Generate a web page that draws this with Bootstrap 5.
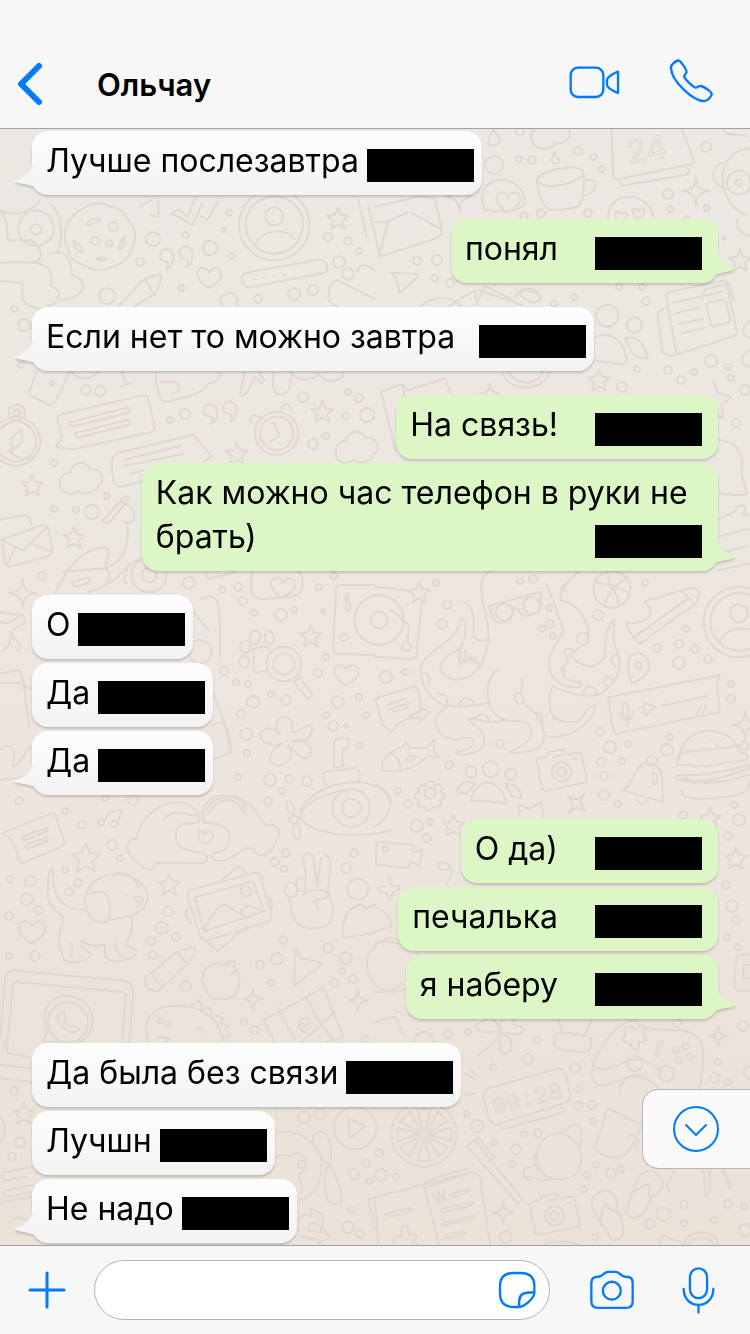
<!DOCTYPE html>
<html lang="ru">
<head>
<meta charset="utf-8">
<meta name="viewport" content="width=device-width, initial-scale=1">
<title>Ольчау</title>
<link href="https://cdn.jsdelivr.net/npm/bootstrap@5.3.0/dist/css/bootstrap.min.css" rel="stylesheet">
<style>
  :root { --ios-blue: #007aff; --bar: #f7f7f7; --line: #a2a2a4; }
  body { font-family: Inter, "Liberation Sans", sans-serif; color: #000; background: var(--bar); }
  .tool { border: 0; background: none; padding: 0; color: var(--ios-blue); line-height: 0; flex: none; }
  .tool svg, .jump svg { fill: none; stroke: currentColor; stroke-linecap: round; stroke-linejoin: round; display: block; }
  .topbar { background: var(--bar); border-bottom: 1px solid var(--line); padding: 40px 36px 0 17px; height: 129px; }
  .topbar h1 { font-size: 31px; font-weight: 600; line-height: 40px; margin: 0 0 0 54px; padding-top: 2px; }
  .calls { gap: 49px; }
  .chat { background: linear-gradient(#ebe8e3, #ede6e0 50%, #ebe2d8); padding: 2px 32px; overflow: hidden; }
  .doodles { position: absolute; inset: 0; width: 100%; height: 100%; fill: none; stroke: #dfd9d1; stroke-width: 2px; stroke-linecap: round; stroke-linejoin: round; }
  .doodles * { vector-effect: non-scaling-stroke; }
  .doodles text { stroke-width: 1px; }
  .thread { gap: 24px; }
  .burst { gap: 4px; }
  .bubble { font-size: 32px; line-height: 44px; padding: 8px 8px 12px 14px; border-radius: 16px; max-width: 84%; position: relative;
    background: linear-gradient(#fdfdfd, #f3f3f4); filter: drop-shadow(0 2px 1px rgba(0,0,0,.17)); }
  .sent .bubble { background: #dcf7c5; padding-right: 16px; }
  .bubble p { margin: 0; }
  .stamp { float: right; width: 107px; height: 33px; margin: 10px 0 0 8px; background: #000; }
  .sent .stamp { margin-left: 37px; }
  .burst .bubble:last-child::after { content: ""; position: absolute; left: -18px; bottom: 8px; width: 22px; height: 24px; background: #f5f5f6;
    clip-path: path("M18 0 C18 9 10 15 0 18 C5 21 13 21 22 24 L22 0 Z"); }
  .sent .bubble:last-child::after { left: auto; right: -18px; background: #dcf7c5;
    clip-path: path("M4 0 C4 9 12 15 22 18 C17 21 9 21 0 24 L0 0 Z"); }
  .jump { position: absolute; right: 0; bottom: 76px; width: 108px; height: 80px; padding: 0 0 0 29px; color: var(--ios-blue);
    background: #fafafa; border: 1px solid #b5b5b7; border-right: 0; border-radius: 16px 0 0 16px; }
  .composer { background: var(--bar); border-top: 1px solid var(--line); height: 89px; padding: 0 35px 0 28px; }
  .field { height: 60px; min-width: 0; border: 1px solid #b4b4b6; border-radius: 30px; background: #fff; margin: 0 40px 0 28px; padding: 0 13px 0 28px; }
  .field input { border: 0; outline: 0; background: none; font-size: 32px; min-width: 0; width: 0; }
  .snap { margin-right: 48px; }
</style>
</head>
<body class="d-flex flex-column min-vh-100">
<header class="topbar d-flex align-items-center">
  <button class="tool" type="button" aria-label="Назад"><svg width="26" height="44" viewBox="0 0 26 44" stroke-width="6"><path d="M22 4 4 22l18 18"/></svg></button>
  <h1 class="flex-grow-1">Ольчау</h1>
  <div class="calls d-flex align-items-center">
    <button class="tool" type="button" aria-label="Видеозвонок"><svg width="51" height="36" viewBox="582 78 153 108" stroke-width="7"><rect x="587" y="83" width="98" height="88" rx="22"/><path d="M729 95V159C715 153 696 142 696 134V120C696 112 715 100 729 95Z"/></svg></button>
    <button class="tool" type="button" aria-label="Звонок"><svg width="45" height="52" viewBox="880 50 136 156" stroke-width="7"><path d="M886 78C886 68 902 57 909 57C914 57 934 84 933 92C932 98 924 101 926 107C930 116 955 138 960 139C966 139 970 133 976 134C984 135 1009 151 1009 158C1009 164 998 180 987 180C955 180 886 120 886 78Z"/></svg></button>
  </div>
</header>

<main class="chat flex-grow-1 position-relative">
  <svg class="doodles" viewBox="0 129 750 1116" preserveAspectRatio="xMidYMin slice" aria-hidden="true">
    <defs>
      <path id="star" d="M0-32 9-10 32-8 15 8 20 31 0 19-20 31-15 8-32-8-9-10Z"/>
      <path id="spark" d="M0-44C3-12 10-5 40 0C10 5 3 12 0 44C-3 12-10 5-40 0C-10-5-3-12 0-44Z"/>
      <path id="heart" d="M-4 32C-45 5-42-28-20-28C-8-28-3-20-1-13C8-34 36-30 36-8C36 8 15 24-4 32Z"/>
      <path id="cloud" d="M-55 38C-75 10-55-20-32-18C-28-52 18-56 24-28C62-34 75 4 52 20C50 44 5 50-8 38C-20 50-45 48-55 38Z"/>
      <g id="photo"><path d="M-75-30C-76-38-70-42-62-42L-45-44-38-60 5-66 18-52 58-58 75 22C76 30 72 34 66 34L-50 58-58 52Z"/><circle r="29"/><circle r="13"/><path d="M-26-44 8-51M35-38h8"/></g>
      <g id="avatar"><circle r="106"/><circle r="86"/><circle cy="-26" r="27"/><path d="M-58 62C-45 10 45 8 60 42"/></g>
      <g id="quotes"><path d="M-40-10c-2-30 40-30 40 2c0 18-8 32-20 36c8-15 5-22-2-24c-12 0-18-6-18-14ZM18-18c-2-30 40-30 40 2c0 18-8 32-20 36c8-15 5-22-2-24c-12 0-18-6-18-14Z"/></g>
      <g id="flop"><path d="M-10-75C20-80 34-50 28-20C40 10 55 30 48 55C40 80 8 76 4 55C-8 30-45-10-46-35C-46-55-30-72-10-75ZM-20 30C-20 5-14-20-8-40C5-15 30-10 48-5"/></g>
    </defs>
    <g transform="translate(375 40) scale(.3333)">
      <path d="M340 308c2-18 8-28 14-40c12 14 20 24 20 34c-2 16-30 20-34 6ZM528 360l10-22c20 25 18 32 4 32q-10 0-14-10"/>
      <circle cx="357" cy="375" r="27"/><path d="M470 300c-8-30 20-40 30-36h80c12 30-5 45-40 48c-20 22-60 20-70-12M330 510c-22-45 0-90 50-90c45 0 80 45 65 75c-20 20-70 24-115 15"/><use href="#heart" x="400" y="485"/>
      <path d="M485 420c10-30 120-50 140-28c14 30-120 70-140 28c2 40 20 75 35 88c30 4 70 0 92-12c15-20 18-70 13-104M630 422c45-15 40 40-2 45"/>
      <path d="M710 260l4 145c0 10 8 14 16 12l218-44c10-4 10-10 8-18l-42-100M732 420l8 18 195-34c10-6 10-14 2-22"/>
      <text transform="translate(762 372) rotate(-10)" font-size="96" font-family="Inter, sans-serif">24</text>
      <path d="M1125 325c-60 5-85 55-82 95c2 50 30 90 70 105M1045 368c-40 10-40 60 0 76"/><circle cx="1092" cy="428" r="36"/><circle cx="1092" cy="428" r="10"/>
      <path d="M1090 535c-15 20 10 55 40 50M700 540c-10-90 130-95 136 0M1045 270c15 25 40 5 70 20"/><use href="#heart" transform="translate(790 520) scale(.5)"/><use href="#heart" transform="translate(738 530) scale(.5)"/>
      <use href="#spark" x="963" y="453"/><use href="#spark" x="253" y="470"/><use href="#star" x="1095" y="660"/>
      <path d="M0 500 130 470 180 475 200 565c5 15-5 25-15 29L15 650-20 500M0 545h40L10 650M38 545l60-28M200 570 110 518M50 698l75 3c10 8 0 12-8 20l-42 38c-10-20 0-30-25-61M310 780l20-42 80 40M420 770c20-25 80-20 75 10M980 780l10-32 72-18 14 50"/>
    </g>
    <g transform="translate(0 200) scale(.3333)">
      <circle cx="108" cy="85" r="53"/><circle cx="108" cy="88" r="16"/><path d="M0 30c50 20 90 10 120-30M25 120c-5-30 0-60-25-90M0 188c90-5 120 10 122-20c2-25-15-35-28-48H30M0 245c30-5 70 10 67 0v50c10 20 40 35 60 30c50-10 70-50 25-68c5-40 0-70-70-70M150 160c60-20 65 40 66 65c50 10 45 70-35 75M150 10c40 30 40 110 20 150"/>
      <path d="M260 20c20-15 60-10 70 0c20 0 40 10 55 40c15 15 20 30 20 50c0 20-15 50-20 60c-20 20-40 30-60 35c-30 10-60 0-70-8c-25-10-45-20-50-45c-10-20-15-50-5-80c15-25 40-45 60-52ZM262 75c0-15 15-20 40-20q-20 22-40 20M220 122q20 10 30 35q-30-5-30-35M290 176q15-6 30 2q-15 8-30-2M358 150q0-25 15-40q5 30-15 40"/><circle cx="285" cy="122" r="12"/><circle cx="328" cy="130" r="10"/><circle cx="340" cy="80" r="13"/>
      <path d="M515 40l20-12 28 22 25-60M515 40l62 35 30-65M602 48l20 12 35-60M420 20l35-20M450 45l25 5 0-50"/><use href="#avatar" x="823" y="75"/>
      <use href="#star" x="1014" y="55"/><use href="#quotes" x="520" y="180"/><use href="#heart" x="628" y="232"/>
      <path d="M355 320 430 238 480 222c5 18-2 40-18 62l-60 36M430 238c10 0 14 20 32 46M740 218 950 180c30-5 45 30 18 40L750 262c-30 0-30-40-10-44M1075 0l25 110M1072 215c5-30 40-20 53 0M985 300c0-35 10-60 30-58l110 55M985 300c10 15 20 15 30 20"/><circle cx="688" cy="305" r="26"/><path d="M762 238h2M790 234h2M822 229h2M854 224h2"/>
      <path d="M110 515 88 575c0 10 5 14 12 16l50 24c10 2 12-4 16-10l44-90M215 515c20 30 60 25 80 0M365 515l15 40M362 560l35-10M470 515c-10 40 10 60 10 80c10 15 30 10 60 0c40-5 80-30 85-45c30 0 40-25 30-35M480 545h40c20 0 25 35-5 35M735 515l-15 70c15 8 20 0 45-55l20 20c15-10 0-20-10-35M820 515c-5 45 0 65 20 68c30 0 30-20 35-68c5 30 70 30 80 5c30 40 80 20 75-5"/>
      <path d="M172 660c0-10 4-14 12-17l240-56c10-3 18 0 20 8l20 85c0 12-4 15-12 17L220 748l-52-6 18-30ZM215 665l165-42c15 0 12 12 4 16l-160 40c-18 0-20-12-9-14M230 698l150-38c15 0 12 12 4 16l-145 36c-18 0-20-12-9-14"/><circle cx="50" cy="638" r="25"/><circle cx="50" cy="638" r="10"/><circle cx="48" cy="724" r="73"/><circle cx="48" cy="724" r="60"/><path d="M35 755v-40l30-28v40Z"/>
      <use href="#quotes" x="652" y="645"/><circle cx="830" cy="700" r="65"/><circle cx="830" cy="700" r="50"/><path d="M820 668c20 30 25 45-10 55M845 630c0-25 30-20 28 0M750 668c0-25 10-25 28-18"/><use href="#star" x="967" y="635"/><use href="#cloud" x="1070" y="742"/>
    </g>
    <g transform="translate(375 290) scale(.3333)">
      <path d="M130 60c25-40 100-50 130-10M220 50l80-50 8 50M310 0l130 45M425 20c5-30 60-35 70 0c-5 30-40 20-70-20"/><circle cx="697" cy="77" r="33"/><circle cx="778" cy="105" r="23"/><path d="M660 140c60-20 90 20 96 72c0 10-10 12-20 10l-75-10M750 145c40-10 60 20 68 60q-40 0-48-20q-12-20-20-40"/>
      <path d="M873 20c0-10 4-12 10-14l170-36 32 150c0 12-5 18-12 20L890 198c-18 0-25-5-28-18L848 80c0-12 5-18 20-24M873 20l32 172M895 38l150-34M905 70l70-18M912 102l72-16M920 130l68-16"/><rect x="1000" y="32" width="60" height="72" rx="8" transform="rotate(-12 1030 68)"/>
      <path d="M380 242c20 70 130 65 145 0M400 242c20 50 90 45 105 0M18 305l62-22 20 18 110-36 20 50M18 305l45 180M80 283l10 40M1125 90c-30 30-25 45 0 55M1125 180c-30 10-35 45 0 50"/><use href="#star" x="672" y="270"/><use href="#spark" transform="translate(345 310) scale(.7)"/>
      <path d="M1015 275l15 35 38 10-28 25 5 40-20-12M1030 450c60 0 80 50 70 100l15 60c-10 10-40 5-80 0M1028 690c30-20 60-20 60-40c20-10 30 10 14 24h20M1030 740l100-25M1030 790l80-20M1030 840l100-20"/>
    </g>
    <g transform="translate(0 450) scale(.3333)">
      <path d="M340 90c-12-60 0-70 10-80l230-56 55 65-30 22M340 90c5 20 20 20 30 18l60-15M370 30l170-42M372 48l178-36M390 72l60-15M25 0c50 50 90 20 92-5"/><use href="#star" x="97" y="105"/><use href="#cloud" x="243" y="85"/><use href="#star" x="710" y="10"/><use href="#star" x="222" y="262"/>
      <path d="M5 268l120-42c12-4 18 0 20 10l12 62c0 12-4 16-12 20L35 350c-12 0-18-4-20-12ZM5 268l55 30c10 5 18 0 22-8l58-58M20 345l25-50M155 305l-50-20M0 210l70-15c15 0 20 10 25 30"/>
      <path d="M305 215l60-65c10-15 20-15 22-5l-60 75ZM365 155c60 20 40 80 5 60M380 220c10 60-5 110-60 135l-130 10M165 430c40-80 70-120 130-135c30-8 40 0 20 60c30 25 10 60-50 70M220 395l45-12c15 5 10 15-30 26c-20 0-20-10-15-14M325 402c40-20 55-70 105-75M380 400c-15-5 0-40 10-60"/><circle cx="447" cy="375" r="52"/><circle cx="447" cy="375" r="22"/><use href="#spark" x="68" y="430"/>
      <path d="M615 365l10 22 80-20M757 365c-10 70 0 80 30 82l95-8c35-10 30-50 15-75"/><use href="#heart" x="850" y="412"/><path d="M600 450c70-40 60 40 60 170M575 480l50 60M1125 405l-105 0c-10 0-12 5-12 15l-8 175c0 10 5 15 12 16l113 5"/><path d="M1042 430c12 10-5 20 5 30s5 15-5 25c-10-15 0-20-5-30s0-20 5-25"/><circle cx="600" cy="605" r="35"/><circle cx="1032" cy="562" r="11"/>
      <path d="M0 485l60 10M10 600c40-20 0-60 65-80c-10-60-20 0-60 0c-25 0-30-30-15-30M40 560c20 20 30 40 10 40M0 670l60-10 15 50 25 10M0 700h70l18 130M630 710c30 60 60 150 60 200l-60 20M640 825c50-30 50 60 55 80M0 900c20-20 50-20 40 40c-5 20 10 10 50-50M0 990l80-10"/>
      <use href="#star" x="932" y="557"/><use href="#heart" x="1040" y="674"/><circle cx="852" cy="642" r="52"/><circle cx="852" cy="642" r="32"/><path d="M882 695l18-12 34 46c8 10-8 22-16 12ZM760 598c20-10 40-10 50 0M758 598c8 40-5 60 10 70l30-6"/><ellipse cx="765" cy="562" rx="16" ry="20"/><ellipse cx="808" cy="563" rx="14" ry="20"/><ellipse cx="735" cy="590" rx="15" ry="18"/><ellipse cx="733" cy="635" rx="15" ry="18"/>
      <path d="M840 855c-40-60 50-80 35-10c10 15 70-50 60 0c-5 30-35 25-60 30c60-15 75 45 40 50c-30-5-30-30-50-40c40 60-60 80-55 40c2-25 15-30 40-45c-60 15-85-20-60-40c20-15 35 0 50 15M862 870v2M1002 875c10-15 20-10 45-8l-5 30-14-2v55l-26 4ZM980 1005c-10-20-15-35-5-40l92-12c15 0 15 30 8 45M900 1080c40-60 100-85 180-84c40 5 80 20 96 60"/><path d="M620 1080c20-45 90-60 120-5"/>
    </g>
    <g transform="translate(375 560) scale(.3333)">
      <path d="M0 80l105 12M140 125l-15 160c0 8-4 12-12 12L0 290M50 150l40 35c15 10 10 10 8 62"/><circle cx="12" cy="180" r="74"/><circle cx="12" cy="180" r="25"/><circle cx="95" cy="260" r="13"/><use href="#star" x="132" y="97"/>
      <path d="M348 30c-40 20-30 60-25 100c20 60 30 130-10 190c-10-20-40-30-60-5c-5-60 20-60 18-105c-5-50-15-40-18-15c-20 60-110 80-115 130c-5 60 40 105 80 112c30 5 80 0 122-8M265 125c40 20 30 70 30 90c5 30 20 30 48 22M255 265c-60 30-75 60-40 85c40 25 80-5 100-30M375 325c-50 20-50 120 0 148c30 20 90-5 95 40c-5 50-60 50-65 65c40 0 110 0 102-60c-5-40-25-55-60-90c-15-30-5-50-5-72M515 70c10 30 30 80 50 140c-5 30-40 50-43 100c0 60 60 80 95 70c10-20-30-10-50-30c-5-30 20-80 70-100c15-60-25-120-80-130c-5-50 40-60 50-85M590 290c20 20 50 40 80 20c40-20 0-70 45-130c10 20-10 60 10 90c30 70-20 110-45 130c-30 15-90 5-145-20M530 385c-20 80 10 110 75 100c30-15 20-40 55-50c0 50-80 110-150 92M220 438c-60 30-40 90 10 100c40 5 60-20 65 10c0 20-30 20-55 32c30 10 90 0 88-40c-5-30-20-40-50-60c15-15 60 20 110 0"/>
      <path d="M342 137l156-42v35c0 20-8 30-30 36c-25 5-35-5-42-22h-10c0 20-8 35-30 42c-25 5-30-5-36-25Z"/><circle cx="388" cy="157" r="26"/><circle cx="470" cy="137" r="26"/><path d="M140 340c20 0 30 10 18 30M185 400c25 0 32 10 32 32M250 438c8-30 40-30 48-4M300 480c10-25 35-20 42 6M570 95c10-30-10-30-14 0M640 225c-30-20-40 10-28 25M575 295c-15-30 0-35 20-25M560 340c-5-15 5-25 10-15M730 285c-20-10-25 25-8 35M710 360c-20-25-40 10-10 20M625 402c5-30 35-30 40 0M440 400c-35-10-20 40 0 30M480 460c30 0 20 20 20 30M535 480c5-15 15-5 20 5M270 270c10 20 0 30-10 25M275 305c10-20 35-15 38 15"/>
      <circle cx="711" cy="88" r="55"/><path d="M665 70c40-5 80 20 100 30M690 130c20-60 50-60 70-80M700 35c-10 30 30 50 30 100"/><path d="M808 125 830 117c30-5 60-20 90-26c40-15 60-5 50 20c-5 20-30 40-60 55L795 252c-15-5-30-40-42-62c40 0 65 0 75-40ZM780 230 940 115M920 92l30 30"/><use href="#avatar" x="1092" y="186"/>
      <path d="M770 370c-40-120 50-100 53-55c0 25-20 40-53 55M700 412l334-66-8 30 8 80-312 66c-8-5-20-90-22-110M742 435c0-10 14-12 16 0l4 30c0 10-14 12-16 0ZM735 460c5 30 40 25 38-5M757 480v15M805 430l5 38 30-28ZM860 437l135-28M965 460l12-18M982 458l14-24"/><circle cx="790" cy="315" r="10"/>
      <path d="M2 415l115-35c5 0 10 5 12 10l10 50M2 415l20 80 30 20 18-25 38-18M38 435l55-20M42 448l60-18M50 455l50-12M105 465l10 10 20-4v14l30-28-30-14v14ZM20 615c10-30 40-50 65-55l8-15 10 18 50 2 25-25-2 32 18 20-40-4c-20 30-60 50-130 45ZM50 580c20 10 30 40 25 55M90 600q15-18 32-10q-10 18-32 10"/>
      <circle cx="165" cy="700" r="16"/><path d="M155 665h20l4 12 12-6 12 14-6 10 10 8v14l-12 4 4 12-14 12-10-6-8 12h-14l-4-12-12 4-10-12 6-10-12-6v-14l12-4-4-12 12-10 10 4Z"/><circle cx="347" cy="628" r="24"/><circle cx="288" cy="635" r="17"/><circle cx="407" cy="643" r="17"/><path d="M287 720c15-70 90-70 108 10ZM247 695c5-30 25-35 54-25l-25 32ZM392 672c30 0 45 15 47 42l-30-5Z"/><use href="#photo" x="560" y="635"/>
      <path d="M743 692c40-30 30-70 65-82c40-5 50 20 54 45l2 70ZM785 715c10 25 30 20 35 4"/><circle cx="830" cy="602" r="15"/><path d="M832 640c20-10 20 35 5 35ZM915 598c0-110 160-110 178-20l20 5c10 10 0 20-20 18c-20 20-30-5-50 10l-50 8c-20-10-30 10-45-5l-38 0c-10-10 0-20 5-36l178-20M905 645c60 5 150-10 215-30l5 10c-60 20-120 50-220 34ZM915 660c20-20 40 25 60 0c20 20 40 0 70 5l80-20M920 690c0 30 60 30 110 22c80-5 100-20 90-52M955 550v2M985 562h2M1005 540v3M1025 556h2M1042 538h3"/>
      <use href="#spark" x="1110" y="495"/><use href="#spark" transform="translate(605 730) rotate(40) scale(.85)"/><use href="#star" x="235" y="795"/><use href="#star" x="1005" y="775"/><path d="M435 775l-4-42 30 15 38-22 5 48M0 675c50 10 70 80 0 125"/>
    </g>
    <g transform="translate(0 790) scale(.3333)">
      <path d="M5 130l150-60 10 2 28 85c0 10-5 12-10 14L65 220c-10-10-15-60-40-80ZM70 138l70-24c10 5 5 12-66 36c-15-2-10-10-4-12M80 162l60-18c10 5 5 12-56 32c-15-2-10-10-4-14"/><circle cx="304" cy="97" r="9"/><circle cx="343" cy="101" r="9"/><path d="M313 97l15-32 38-6-14 42"/>
      <path d="M412 145c5-50 60-110 110-106c60-10 80 40 75 55c-20 15-60-10-70 35c0 60 40 50 80 60c20 10 20 25 0 30c-50 5-90-5-140 0c-5 20-20 25-35 15c-15-15-40-25-50-60c0-20 10-25 30-29M495 85c20-30 60-15 100-5M612 98c-15-50 20-90 70-80c60-5 90 50 115 90c30-10 50 10 35 40c-10 30-30 55-60 45c-20-10-5-20-20-18c-40-5-50 50-110 35c-15-10 0-25 20-25c40-10 50-90-50-87M625 70c40-60 80-50 115 5"/><use href="#heart" transform="translate(617 142) scale(.65)"/>
      <path d="M1176 120c-60 20-220 30-275-35c0-40 60-70 130-84M885 80c-20-10-30-30-25-45c15-5 25 10 22 40c-15 0-20 20-5 25c20 5 25-15 12-20M882 100c-10 40 10 60 18 40c5-20-5-30-10-42"/><circle cx="1054" cy="54" r="56"/><circle cx="1054" cy="54" r="28"/>
      <use href="#star" transform="translate(258 203) scale(1.35)"/><use href="#star" x="508" y="283"/><path d="M255 360c-70-5-100-30-95-125c-15-10-20 60-15 90c5 40 50 40 45 75c-30 50 0 80 0 110c20 10 60 10 80-10c5-20-20-20-25-30v-18c20 20 50 15 72 12c-5 20-5 40 10 46c40 10 90-10 80-30c-5-15-35-5-32-15c15-30 25-40 22-85M265 310c40-10 60-10 65 40c5 40-10 50-30 48c-40-5-50-70-45-78c15-50 60-70 100-66c60 0 100 50 85 80c-15 50-70 45-105 55M350 250c40-5 55 20 65 40M378 315v2M405 322c10-5 18-2 24 5c0 15-24 10-24-5M410 345c10 5 15 0 15-8M215 460v40M350 455c-5 30 5 40 25 45"/>
      <path d="M570 300l190-50c15-5 20 5 22 12l32 110c0 15-5 20-12 24L620 452c-12 0-18-5-20-14L562 318c0-10 3-15 8-18ZM585 322l175-48 32 90-180 60ZM615 415c20-40 40-70 60-70l70 40M720 370c20-30 30-25 60-10M665 270l50-42 25 20M600 440c30 20 45 40 55 42l85-75M562 355c-10 20 0 35 10 45M805 320c15 15 10 25 8 40"/><circle cx="738" cy="304" r="16"/>
      <path d="M918 265l-8-60c0-20 28-20 30 0l12 85 10-80c0-20 30-15 30 5l-8 90c40 90-5 110-45 110c-50 0-65-30-72-95M858 285c-10 20 0 35 15 36c30 0 20-50-5-42M890 275c5-25 30-10 28 15c-5 20-20 15-28 5ZM910 315c15-20 70-20 75 0c-5 15-30 15-45 18c10 10 15 25 15 30"/><circle cx="1073" cy="298" r="32"/><path d="M1030 443c-5-50 5-90 55-100l12 14 28-14M1030 443l95-15"/>
      <use href="#heart" transform="translate(97 425) scale(1.1)"/><path d="M440 560 530 485l54-14c5 15-10 40-20 50l-90 82c-20 5-40-10-40-43M535 485c5 20 25 35 30 36M455 550l30 40M606 575c0-50 40-60 60-50c30-15 60 20 50 65c-5 20-20 45-50 35c-40 10-45-20-60-50M680 530c0-20 10-15 24-16q5 30-10 40M888 475l14 30 68 15-88 68Z"/><use href="#spark" transform="translate(758 628) scale(.75)"/><use href="#spark" transform="translate(1073 632) scale(.75)"/>
      <path d="M15 750l-8 40M0 750l15-180c0-20 10-30 30-28l330 30c20 5 25 15 25 35l-12 150M20 790l18-200c0-10 5-15 12-14l320 30c8 2 10 5 8 12l-12 140M20 790l70 10M0 825l100 10M0 865l100 12M130 755l10-30c-40-150 150-130 137-20c-10 50-60 70-97 50Z"/><circle cx="204" cy="697" r="60"/><path d="M180 668c15-8 20 15 12 22c0 10 15 20 25 20c10-5 20 5 18 10c-25 25-80-25-55-52"/>
      <path d="M445 755c-20-60 10-110 80-106c60-5 130 20 145 105M570 650l28-20 8 30M610 655l24 0 0 20M645 675l24 8-8 15M665 700l22 8-12 12M670 738l22-2-14 14M470 740l40 5-15 12M590 718q15-10 25 8"/><circle cx="480" cy="692" r="8"/><circle cx="506" cy="702" r="8"/><path d="M790 690 970 594l60 145M790 690l35 68M835 655l50 95M918 622l45 80M1005 665l-100 92M1030 740l-50 15M970 710l40 50M895 710c0-30 35-35 35-5l-15 25Z"/><circle cx="911" cy="704" r="6"/><circle cx="1180" cy="525" r="80"/>
    </g>
    <g transform="translate(375 840) scale(.3333)">
      <path d="M5 5l110 10v22l28-8-10 50-25-15-10 20-95-10Z"/><circle cx="31" cy="27" r="8"/><path d="M40 110c5 30 10 30 32 25c10 20-20 15-22 28c5 20-10 30-15-5c-30 0-40-15-5-20M0 200c30 10 50 40 50 60l-50 15M0 310c30-15 70 0 75 5M0 455c30 5 70 0 80-30"/><path d="M185 70c40-10 60 20 30 60M190 75c0 20 20 15 40 10"/>
      <use href="#star" x="1083" y="55"/><path d="M1125 340l-40 8c-10 100-10 100 10 105h30M1125 375h-20v40h20"/>
      <path d="M378 575c-80 10-90-20-55-30c20-20 40-10 55 30c-20-50 50-50 40-20c50 5 30 45-40 20c50 30 30 70 15 65c-15 10-25-20-15-65c-10 30-40 50-70 72M550 540l15 40M650 540l-25 50M540 590c0-15 20-12 40-10c40 5 75 10 70 20c0 40-20 40-40 35c-70-5-80-10-70-45M650 700c10-60 60-150 130-160c20 50 150 10 185 50c30 20 20 90 10 160M650 700c10 70 80 20 110 10c40-5 70 10 95 40M750 575c0-20 20-20 30-5c20-20 40-5 25 15c20 10 0 25-15 20c10 30-20 30-25 5c-20 0-25-15-15-20ZM838 645l16-40c10-5 12 0 8 8l-16 36ZM1125 680c-20 0-30 20 0 40"/><circle cx="780" cy="670" r="23"/><circle cx="875" cy="700" r="23"/><circle cx="902" cy="630" r="9"/><circle cx="932" cy="618" r="9"/><circle cx="914" cy="662" r="9"/><circle cx="944" cy="650" r="9"/><use href="#spark" transform="translate(1030 588) scale(.7)"/><path d="M0 545l60-15 30 60M60 510l20 10M120 605c0-40 50-40 55 0"/>
    </g>
    <g transform="translate(0 1030) scale(.3333)">
      <use href="#star" x="72" y="250"/><path d="M0 260c20 20 20 60 0 80M100 410 20 425c-20 5-20 25 0 25l60-10M100 465l-75 15c-20 0-20 20 0 20l75-15M10 515l90-15M30 580c10-25 50-20 60 5M830 310c60-20 130 30 135 80c5 60-20 110-65 120M820 390c20-30 60 0 65-20c40-10 40 60 15 60c-10 20 20 40 0 60M960 305c25-5 40 50 30 100c-20-10-60-60-50-90ZM985 405c20 20 45 80 40 110c-20 15-45 5-45-20c-5-40-10-60 5-90M830 240v25"/><circle cx="1065" cy="294" r="64"/><path d="M1045 265l5 60 45-38Z"/><circle cx="905" cy="403" r="12"/><path d="M895 600c-10-50 20-50 40-40l-5-25 40 20-5 40-15-15c-30-5-20 10-25 20l40 8v-15l25 28-35 20v-12l-55-10M1125 500l-20 8 20 90"/>
    </g>
    <g transform="translate(375 1060) scale(.3333)">
      <path d="M325 110c0-15 5-20 15-24L540 28c20-5 30 5 34 20l12 60c0 15-10 20-18 22L370 192c-15 0-25-5-30-20ZM375 192l8 16 180-50c5-8 0-14-8-16M270 40l30 20M280 25l22 18M272 105l28-4"/>
      <text transform="translate(358 164) rotate(-14)" font-size="72" font-family="Liberation Mono, monospace">09:28</text>
      <circle cx="147" cy="222" r="98"/><path d="M147 218l-22-72h44ZM155 220l34-66 30 30ZM160 223l70-20v40ZM155 230l65 30-28 30ZM147 232l-20 70h40ZM138 228l-36 62-28-30ZM135 222l-68-18v40ZM140 218l-66-32 30-32Z"/>
      <path d="M275 258l24-18 144 178-14 12ZM290 245l20-12 50 60-20 12M318 270l15-12M485 280c10-50 50-70 90-55c50 30 50 80 35 110c-30 30-60 25-80 20c-30-10-50-40-45-75ZM565 215l38-24c20 10 20 40 12 65M480 285c-20 40 30 60 50 75c-50 10-60-20-85-5M468 320c-30 0-30 40 0 42"/>
      <path d="M0 412l145-38c10-15 100-40 130-47c5 5 5 10 0 12l-130 35 48 180M0 412l10 140M145 385l140-46c20-5 30 5 32 20l28 195M38 460l70-16c10 4 5 12-66 26c-12-2-10-8-4-10M230 402l50-14c10 4 5 12-46 22c-12 0-10-6-4-8M200 446l90-20c10 4 5 12-86 30c-12 0-10-6-4-10M205 488l90-20c10 4 5 12-86 28c-12 0-10-6-4-8M215 524l50-10c10 4 5 12-46 20c-12 0-10-6-4-10M60 550c-15-30 10-25 20-18c-10-50 30-40 20-8c30-10 30 15 10 20l20 10"/><text transform="translate(178 432) rotate(-14)" font-size="44" font-family="Inter, sans-serif">W</text>
      <use href="#spark" transform="translate(385 458) scale(.8)"/><use href="#photo" x="539" y="467"/><use href="#flop" x="696" y="467"/><use href="#flop" transform="translate(800 400) rotate(52)"/>
      <path d="M700 145l100 50M695 150c-15 50-20 80-35 110c20 40 60 30 80 30c40-20 60-100 60-110M735 95c0-50 60-60 80-40M755 235c20-30 50 10 25 30M650 0c5 40 60 30 100 5c40-15 80 0 110 30M880 385c-10 0-5-5 20-60M985 330l8 80c10 0 12-5 12-80M1040 330l25 55c10 0 8-5-20-55M855 555l5-30 80 30M505 555c20-15 80-15 105 0M925 555c10-50 100-50 105 0M940 555c10-30 70-30 75 0"/>
    </g>
    <g id="pebbles"></g>
  </svg>

  <div class="thread d-flex flex-column position-relative">
    <section class="burst d-flex flex-column align-items-start">
      <div class="bubble"><p>Лучше послезавтра<span class="stamp"></span></p></div>
    </section>
    <section class="burst sent d-flex flex-column align-items-end">
      <div class="bubble"><p>понял<span class="stamp"></span></p></div>
    </section>
    <section class="burst d-flex flex-column align-items-start">
      <div class="bubble"><p>Если нет то можно завтра<span class="stamp ms-4"></span></p></div>
    </section>
    <section class="burst sent d-flex flex-column align-items-end">
      <div class="bubble"><p>На связь!<span class="stamp"></span></p></div>
      <div class="bubble"><p>Как можно час телефон в руки не брать)<span class="stamp"></span></p></div>
    </section>
    <section class="burst d-flex flex-column align-items-start">
      <div class="bubble"><p>О<span class="stamp"></span></p></div>
      <div class="bubble"><p>Да<span class="stamp"></span></p></div>
      <div class="bubble"><p>Да<span class="stamp"></span></p></div>
    </section>
    <section class="burst sent d-flex flex-column align-items-end">
      <div class="bubble"><p>О да)<span class="stamp"></span></p></div>
      <div class="bubble"><p>печалька<span class="stamp"></span></p></div>
      <div class="bubble"><p>я наберу<span class="stamp"></span></p></div>
    </section>
    <section class="burst d-flex flex-column align-items-start">
      <div class="bubble"><p>Да была без связи<span class="stamp"></span></p></div>
      <div class="bubble"><p>Лучшн<span class="stamp"></span></p></div>
      <div class="bubble"><p>Не надо<span class="stamp"></span></p></div>
    </section>
  </div>
  <button class="jump" type="button" aria-label="Вниз"><svg width="48" height="48" viewBox="0 0 48 48" stroke-width="2"><circle cx="24" cy="24" r="22"/><path d="M14 20l10 10 10-10"/></svg></button>
</main>

<footer class="composer d-flex align-items-center">
  <button class="tool" type="button" aria-label="Прикрепить"><svg width="38" height="38" viewBox="0 0 38 38" stroke-width="3"><path d="M19 2v34M2 19h34"/></svg></button>
  <div class="field d-flex align-items-center flex-grow-1">
    <input class="flex-grow-1" type="text" aria-label="Сообщение">
    <button class="tool" type="button" aria-label="Стикеры"><svg width="38" height="38" viewBox="366 632 115 115" stroke-width="7"><path d="M430 741H415C385 741 372 728 372 700V678C372 650 385 638 413 638H435C463 638 476 650 476 678V697M430 741C445 741 476 715 476 697H460C440 697 430 705 430 725Z"/></svg></button>
  </div>
  <button class="tool snap" type="button" aria-label="Камера"><svg width="44" height="40" viewBox="645 628 133 118" stroke-width="7"><path d="M649 668C649 650 656 647 670 647C688 645 686 632 700 632H722C736 632 734 645 752 647C766 647 774 650 774 668V720C774 734 768 741 754 741H669C655 741 649 734 649 720Z"/><circle cx="711" cy="689" r="27"/></svg></button>
  <button class="tool" type="button" aria-label="Голосовое сообщение"><svg width="33" height="47" viewBox="921 622 100 142" stroke-width="7"><rect x="945" y="626" width="52" height="90" rx="26"/><path d="M926 688C926 753 1016 753 1016 688M971 738V760"/></svg></button>
</footer>

<script src="https://cdn.jsdelivr.net/npm/bootstrap@5.3.0/dist/js/bootstrap.bundle.min.js"></script>
<script>
  // Small rings scattered between the doodles: x, y, radius
  const rings = [[520,131,4],[578,151,4],[594,157,3],[519,159,3],[532,160,4],[602,169,3],[706,147,5],[668,194,5],[670,209,3],[687,218,2],[707,208,3],[524,216,4],[541,213,4],[588,213,4],[417,261,4],[437,260,5],[435,278,3],[450,283,4],[724,238,2],[619,287,3],[642,287,3],
    [153,239,7],[186,235,3],[210,248,7],[140,262,4],[107,296,8],[181,288,3],[229,213,3],[224,230,2],[232,256,3],[258,299,4],[294,294,6],[313,290,5],[339,262,6],[348,274,6],[328,237,4],[348,241,4],[359,251,3],[14,309,3],[24,325,6],[21,365,3],[52,383,2],[86,390,5],[100,391,5],[185,414,5],[170,420,3],[303,397,5],[348,392,3],[359,398,4],[346,416,3],[367,415,7],[313,444,5],[326,436,3],
    [711,361,6],[668,370,4],[694,372,3],[681,380,4],[728,367,3],[731,378,3],[622,387,5],[637,369,3],[745,390,5],[646,301,4],[574,297,3],[554,304,3],[736,423,4],
    [54,463,3],[107,496,3],[54,509,3],[76,510,3],[92,512,7],[42,576,4],[189,583,6],[222,590,3],[238,587,4],[319,587,3],[334,576,3],[243,601,4],[254,613,3],[281,615,6],[294,610,3],[323,611,2],[224,671,4],[236,682,3],[248,684,3],[253,702,6],[286,700,5],[271,694,3],[241,714,4],[246,734,6],[247,753,3],[318,673,4],[338,702,6],[326,715,3],[333,726,5],[346,726,2],[360,745,3],[326,657,3],[270,780,6],[289,779,4],[307,781,5],[238,777,3],[268,801,4],[282,791,3],[359,697,3],[366,715,3],
    [436,583,3],[447,605,4],[442,624,5],[520,581,3],[533,579,4],[549,608,3],[550,624,4],[542,629,3],[553,636,3],[598,615,5],[645,583,3],[686,629,3],[657,648,4],[679,644,4],[695,649,4],[679,663,6],[708,659,4],[386,677,6],[405,672,3],[731,684,3],[731,699,4],[600,732,4],[610,747,6],[628,744,3],[667,750,6],[670,737,3],[500,744,4],[449,765,4],[601,762,4],[622,761,3],[604,776,4],[604,795,5],[618,804,3],[398,791,3],[408,804,4],[417,826,6],[430,822,3],[427,838,4],[683,815,4],[734,805,3],[739,820,6],[728,836,4],[744,746,4],
    [19,801,4],[65,811,3],[105,798,3],[133,800,5],[82,825,4],[112,845,5],[120,858,3],[65,870,3],[30,881,5],[78,883,4],[69,892,4],[27,899,6],[39,910,4],[10,879,3],[9,916,4],[9,956,3],[35,956,5],[168,911,5],[162,928,6],[176,937,4],[151,941,4],[153,955,4],[186,986,5],[275,862,4],[286,853,4],[284,869,3],[346,868,5],[354,853,4],[283,940,4],[277,959,6],[260,965,4],[271,983,3],[328,948,5],[346,958,6],[342,971,3],[353,979,4],[335,983,4],[244,1022,3],[255,1030,4],[365,1039,3],
    [726,885,4],[732,906,6],[736,920,4],[727,937,3],[738,947,3],[448,1034,4],[468,1032,3],[528,1059,5],[537,1040,3],[575,1068,5],[493,1067,3],[677,1023,4],[743,1026,5],[718,1062,3],[715,1078,5],[728,1082,3],
    [14,1091,4],[20,1142,5],[12,1157,4],[304,1117,6],[320,1114,5],[366,1163,4],[354,1174,5],[369,1181,3],[348,1227,6],[360,1234,4],[351,1210,3],
    [379,1153,4],[381,1175,6],[396,1177,3],[477,1126,6],[467,1114,3],[578,1106,4],[592,1105,4],[579,1089,3],[593,1121,3],[524,1134,3],[538,1133,4],[516,1149,5],[494,1142,3],[512,1164,3],[596,1165,3],[587,1175,3],[611,1173,5],[621,1169,3],[584,1189,3],[506,1237,6],[595,1237,3],[650,1224,5],[663,1214,7],[684,1205,4],[684,1223,3],[714,1220,3],[728,1204,4],[744,1207,3],[745,1230,6]];
  document.getElementById('pebbles').innerHTML = rings.map(([x, y, r]) => `<circle cx="${x}" cy="${y}" r="${r}"/>`).join('');
</script>
</body>
</html>
